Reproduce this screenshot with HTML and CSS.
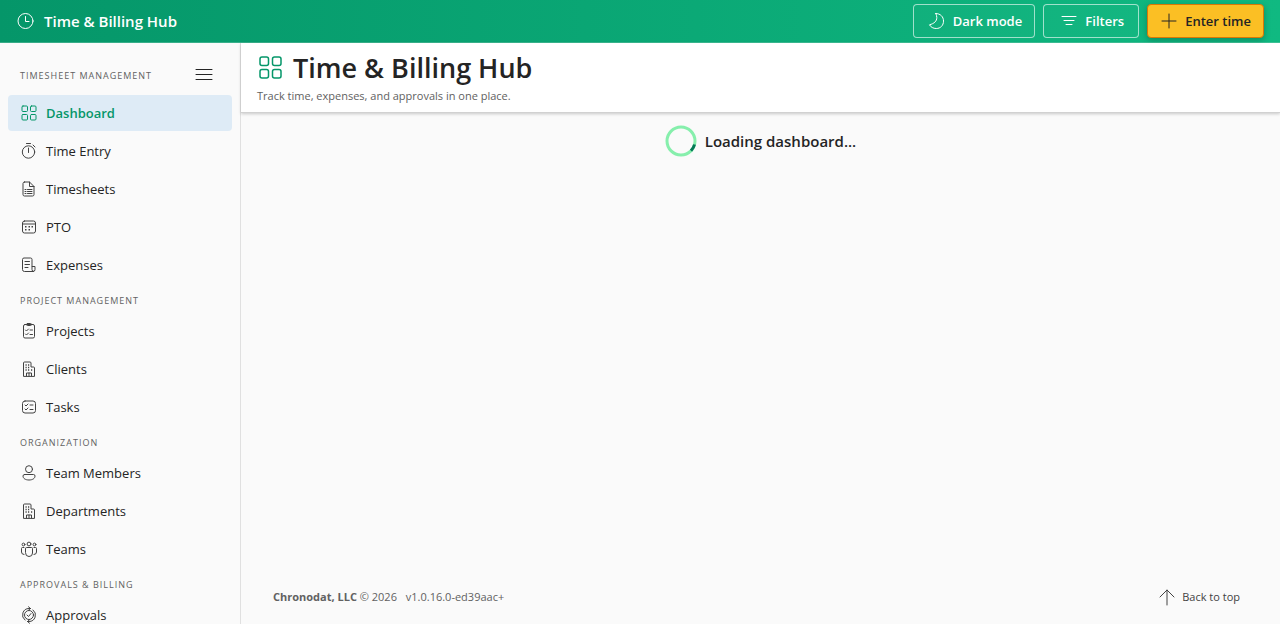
FILE: index.html
```html
<!DOCTYPE html>
<html lang="en">
<head>
    <meta charset="UTF-8" />
    <meta name="viewport" content="width=device-width, initial-scale=1.0" />
    <title>Time &amp; Billing Hub</title>
    <link rel="stylesheet" href="styles.css">
</head>
<body>
    <header class="topbar">
        <a href="#" class="brand">
            <svg class="icon" width="18" height="18" viewBox="0 0 18 18"><circle cx="9.500" cy="9" r="7.500" /><path d="M9.500 4.500v5h3.500" /></svg>
            <span>Time &amp; Billing Hub</span>
        </a>
        <div class="actions">
            <button type="button" class="btn">
                <svg class="icon" width="18" height="18" viewBox="0 0 18 18"><path d="M7.800 1.500c4.700 0 7.700 3.300 7.700 7.600 0 4.300-3 7.400-7.200 7.400-3 0-5.500-1.300-6.800-3.700 4.700-1.300 7.300-3.500 7.300-7.300 0-1.400-.4-2.800-1-4z" /></svg>
                Dark mode
            </button>
            <button type="button" class="btn">
                <svg class="icon" width="18" height="18" viewBox="0 0 18 18"><path d="M2 4.500h14M4 8.500h10M6 12.500h6" /></svg>
                Filters
            </button>
            <button type="button" class="btn btn-primary">
                <svg class="icon" width="18" height="18" viewBox="0 0 18 18"><path d="M9 2v14M2 9h14" /></svg>
                Enter time
            </button>
        </div>
    </header>

    <div class="layout">
        <nav class="sidebar">
            <div class="sidebar-head">
                <h2 class="nav-label">Timesheet Management</h2>
                <button type="button" class="menu-btn" aria-label="Toggle menu">
                    <svg class="icon" width="18" height="18" viewBox="0 0 18 18"><path d="M1 3.500h16M1 8.500h16M1 13.500h16" /></svg>
                </button>
            </div>
            <a href="#" class="nav-item active">
                <svg class="icon" width="18" height="18" viewBox="0 0 18 18"><rect x="2" y="2" width="5.500" height="5.500" rx="1" /><rect x="10.500" y="2" width="5.500" height="5.500" rx="1" /><rect x="2" y="10.500" width="5.500" height="5.500" rx="1" /><rect x="10.500" y="10.500" width="5.500" height="5.500" rx="1" /></svg>
                Dashboard
            </a>
            <a href="#" class="nav-item">
                <svg class="icon" width="18" height="18" viewBox="0 0 18 18"><circle cx="8.500" cy="10" r="6.200" /><path d="M8.500 6v4.500M6.500 1.500h4M13 3l2 2" /></svg>
                Time Entry
            </a>
            <a href="#" class="nav-item">
                <svg class="icon" width="18" height="18" viewBox="0 0 18 18"><path d="M4.500 2h5l4.500 4.500v8q0 1.500-1.500 1.500h-8q-1.500 0-1.500-1.500v-11q0-1.500 1.500-1.500zM9.500 2v4.500h4.500M5 9.500h1M7.500 9.500h4.500M5 11.500h1M7.500 11.500h4.500M5 13.500h1M7.500 13.500h4.500" /></svg>
                Timesheets
            </a>
            <a href="#" class="nav-item">
                <svg class="icon" width="18" height="18" viewBox="0 0 18 18"><rect x="2.500" y="3" width="13" height="12" rx="2" /><path d="M2.500 6h13" /><path class="dots" d="M8.500 8.800h1.500M11.500 8.800h1.500M5 11.800h1.500M8.500 11.800h1.500M5 8.800h1.500" /></svg>
                PTO
            </a>
            <a href="#" class="nav-item">
                <svg class="icon" width="18" height="18" viewBox="0 0 18 18"><path d="M12 10.500v-7q0-1.500-1.500-1.500h-6.500q-1.500 0-1.500 1.500v10q0 2 2 2h8.500q2 0 2-2v-3h-3v3q0 2 1.500 2M5 5.500h4.500M5 8.500h4.500M5 11.500h3" /></svg>
                Expenses
            </a>

            <h2 class="nav-label">Project Management</h2>
            <a href="#" class="nav-item">
                <svg class="icon" width="18" height="18" viewBox="0 0 18 18"><rect x="3.500" y="2.500" width="11" height="13.500" rx="1.500" /><rect x="6.500" y="1.500" width="5" height="2" rx="1" /><path d="M5.500 8l1 1 2-2M10 8h2.500M5.500 12l1 1 2-2M10 12.500h2.500" /></svg>
                Projects
            </a>
            <a href="#" class="nav-item">
                <svg class="icon" width="18" height="18" viewBox="0 0 18 18"><path d="M3.500 16v-13q0-1 1-1h5.500q1 0 1 1v4h2.500q1 0 1 1v8zM6.500 16v-3h5v3M9 13v3" /><path class="dots" d="M5.500 5h1.200M8 5h1.200M5.500 7.500h1.200M8 7.500h1.200M5.500 10h1.200M8 10h1.200M11 10h1.200" /></svg>
                Clients
            </a>
            <a href="#" class="nav-item">
                <svg class="icon" width="18" height="18" viewBox="0 0 18 18"><rect x="2.500" y="3" width="13" height="12" rx="2.500" /><path d="M5 7l1 1 2-2M10 7h3M5 11l1 1 2-2M10 11.500h3" /></svg>
                Tasks
            </a>

            <h2 class="nav-label">Organization</h2>
            <a href="#" class="nav-item">
                <svg class="icon" width="18" height="18" viewBox="0 0 18 18"><circle cx="9" cy="5.200" r="3.500" /><path d="M4.500 10.500h9q1.500 0 1.500 1.500c0 2.500-2.500 4-6 4s-6-1.500-6-4q0-1.500 1.500-1.500z" /></svg>
                Team Members
            </a>
            <a href="#" class="nav-item">
                <svg class="icon" width="18" height="18" viewBox="0 0 18 18"><path d="M3.500 16v-13q0-1 1-1h5.500q1 0 1 1v4h2.500q1 0 1 1v8zM6.500 16v-3h5v3M9 13v3" /><path class="dots" d="M5.500 5h1.200M8 5h1.200M5.500 7.500h1.200M8 7.500h1.200M5.500 10h1.200M8 10h1.200M11 10h1.200" /></svg>
                Departments
            </a>
            <a href="#" class="nav-item">
                <svg class="icon" width="18" height="18" viewBox="0 0 18 18"><circle cx="9" cy="4" r="1.900" /><circle cx="3.500" cy="4.500" r="1.400" /><circle cx="14.500" cy="4.500" r="1.400" /><path d="M5.500 8.500q0-1 1-1h5q1 0 1 1v4.500q0 3.500-3.500 3.500t-3.500-3.500zM4 7.500h-1.500q-1 0-1 1v3.500q0 2.500 2.500 2.500M14 7.500h1.500q1 0 1 1v3.500q0 2.500-2.500 2.500" /></svg>
                Teams
            </a>

            <h2 class="nav-label">Approvals &amp; Billing</h2>
            <a href="#" class="nav-item">
                <svg class="icon" width="18" height="18" viewBox="0 0 18 18"><circle cx="9" cy="9" r="4.500" /><path d="M7 9l1.500 1.500 2.500-3M8.500 0.800l2 1.700-2 1.700M10.500 2.500h-1.500a6.500 6.500 0 0 0-4 11.600M9.500 17.200l-2-1.700 2-1.700M7.500 15.500h1.500a6.500 6.500 0 0 0 4-11.600" /></svg>
                Approvals
            </a>
        </nav>

        <main class="main">
            <div class="page-header">
                <h1>
                    <svg class="icon" width="28" height="28" viewBox="0 0 28 28"><rect x="3" y="3" width="8.500" height="8.500" rx="2" /><rect x="15.500" y="3" width="8.500" height="8.500" rx="2" /><rect x="3" y="15.500" width="8.500" height="8.500" rx="2" /><rect x="15.500" y="15.500" width="8.500" height="8.500" rx="2" /></svg>
                    Time &amp; Billing Hub
                </h1>
                <p>Track time, expenses, and approvals in one place.</p>
            </div>

            <div class="loading" role="status">
                <svg class="spinner" width="32" height="32" viewBox="0 0 32 32"><circle cx="16" cy="16" r="14" /><path d="M29.500 19.500a14 14 0 0 1-3.500 6.300" /></svg>
                <span>Loading dashboard...</span>
            </div>

            <footer class="footer">
                <p><strong>Chronodat, LLC</strong> © 2026 <span class="version">v1.0.16.0-ed39aac+</span></p>
                <a href="#" class="back-top">
                    <svg class="icon" width="18" height="18" viewBox="0 0 18 18"><path d="M9 17v-15M2 9l7-7 7 7" /></svg>
                    Back to top
                </a>
            </footer>
        </main>
    </div>
</body>
</html>
```
FILE: styles.css
```css
* {
    box-sizing: border-box;
}

body {
    margin: 0;
    height: 100vh;
    display: flex;
    flex-direction: column;
    overflow: hidden;
    font-family: "Open Sans", "Noto Sans", sans-serif;
    font-size: 13px;
    color: #242424;
    background-color: #fafafa;
}

h1, h2, p {
    margin: 0;
}

a {
    color: inherit;
    text-decoration: none;
}

.icon {
    flex: none;
    fill: none;
    stroke: currentColor;
    stroke-width: 1;
    stroke-linecap: round;
    stroke-linejoin: round;
}

.icon .dots {
    stroke-width: 1.5;
    stroke-linecap: butt;
}

/* Top bar */
.topbar {
    flex: none;
    height: 43px;
    padding: 0 16px;
    display: flex;
    justify-content: space-between;
    align-items: center;
    color: white;
    background: linear-gradient(to right, #059669, #10b981);
    border-bottom: 1px solid rgba(255, 255, 255, 0.2);
}

.brand {
    display: flex;
    align-items: center;
    gap: 10px;
    font-size: 15px;
    font-weight: 600;
}

.actions {
    display: flex;
    gap: 8px;
}

.btn {
    height: 34px;
    min-width: 96px;
    padding: 0 12px 0 14px;
    display: flex;
    justify-content: center;
    align-items: center;
    gap: 7px;
    font: inherit;
    font-weight: 600;
    color: white;
    background-color: rgba(255, 255, 255, 0.02);
    border: 1px solid rgba(255, 255, 255, 0.6);
    border-radius: 4px;
    cursor: pointer;
}

.btn-primary {
    padding-left: 12px;
    color: #242424;
    background-color: #fbbf24;
    border-color: #d97706;
    box-shadow: 0 2px 6px rgba(0, 0, 0, 0.25);
}

/* Sidebar */
.layout {
    flex: 1;
    min-height: 0;
    display: flex;
}

.sidebar {
    flex: none;
    width: 241px;
    padding: 12px 8px;
    overflow: hidden;
    border-right: 1px solid #e0e0e0;
}

.sidebar-head {
    height: 40px;
    display: flex;
    justify-content: space-between;
    align-items: center;
    padding-right: 15px;
}

.nav-label {
    padding: 10px 12px 4px;
    font-size: 9px;
    line-height: 16px;
    font-weight: 400;
    letter-spacing: 1px;
    text-transform: uppercase;
    color: #616161;
}

.sidebar-head .nav-label {
    padding: 2px 12px 0;
}

.menu-btn {
    padding: 4px;
    display: flex;
    color: #242424;
    background: none;
    border: none;
    cursor: pointer;
}

.nav-item {
    height: 36px;
    padding: 0 12px;
    display: flex;
    align-items: center;
    gap: 8px;
    border-radius: 4px;
}

.nav-item .icon {
    stroke: #424242;
}

.nav-item + .nav-item {
    margin-top: 2px;
}

.nav-item:hover {
    background-color: #f0f0f0;
}

.nav-item.active {
    color: #059669;
    font-weight: 600;
    background-color: #deebf6;
}

.nav-item.active .icon {
    stroke: #059669;
}

/* Main area */
.main {
    flex: 1;
    min-width: 0;
    display: flex;
    flex-direction: column;
}

.page-header {
    padding: 5px 16px 8px;
    background-color: white;
    border-bottom: 1px solid #d1d1d1;
    box-shadow: 0 1px 3px rgba(0, 0, 0, 0.2);
}

.page-header h1 {
    display: flex;
    align-items: center;
    gap: 8px;
    font-size: 27px;
    line-height: 40px;
    font-weight: 600;
}

.page-header .icon {
    color: #059669;
    stroke-width: 1.5;
}

.page-header p {
    font-size: 11px;
    line-height: 16px;
    color: #616161;
}

.loading {
    padding: 12px 0;
    display: flex;
    justify-content: center;
    align-items: center;
    gap: 8px;
    font-size: 15px;
    font-weight: 600;
}

.spinner {
    fill: none;
    stroke: #86efac;
    stroke-width: 3;
}

.spinner path {
    stroke: #047857;
}

.footer {
    margin-top: auto;
    padding: 16px 40px 15px 32px;
    display: flex;
    justify-content: space-between;
    align-items: center;
    font-size: 11px;
    line-height: 24px;
    color: #616161;
}

.version {
    margin-left: 6px;
}

.back-top {
    display: flex;
    align-items: center;
    gap: 6px;
    color: #424242;
}
```
